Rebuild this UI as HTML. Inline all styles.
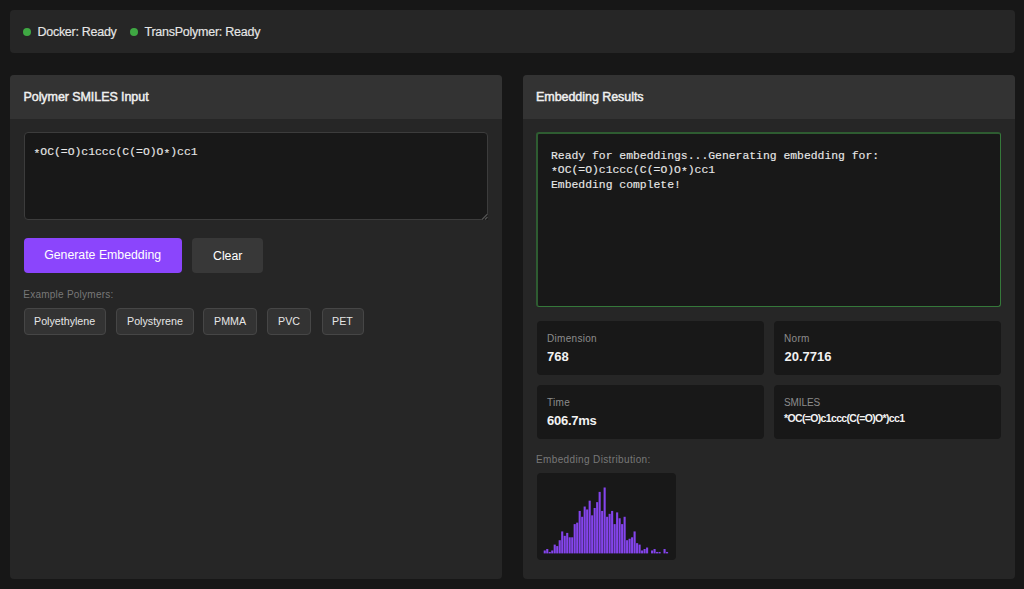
<!DOCTYPE html>
<html><head><meta charset="utf-8">
<style>
*{box-sizing:border-box;margin:0;padding:0}
html,body{width:1024px;height:589px;overflow:hidden;background:#171717;font-family:"Liberation Sans",sans-serif;color:#e8e8e8}
.a{position:absolute;white-space:nowrap;line-height:1}
.status{left:10px;top:10px;width:1005px;height:43px;background:#262626;border-radius:4px}
.dot{width:7.8px;height:7.8px;border-radius:50%;background:#3fa843}
.st{font-size:12.5px;color:#e6e6e6;-webkit-text-stroke:0.15px #e6e6e6}
.panel{top:75px;width:492px;height:503.5px;background:#262626;border-radius:4px;overflow:hidden}
.ph{position:absolute;left:0;top:0;width:100%;height:43.5px;background:#333333}
.pt{font-size:12.5px;color:#f0f0f0;-webkit-text-stroke:0.45px #f0f0f0}
.ta{background:#181818;border:1px solid #3c3c3c;border-radius:4px}
.mono{font-family:"Liberation Mono",monospace;white-space:pre;color:#e8e8e8;font-size:11.4px;-webkit-text-stroke:0.12px #e8e8e8}
.ast{position:relative;top:1.5px}
.btn{border-radius:4px;color:#fff}
.chip{height:27px;background:#333;border:1px solid #464646;border-radius:4px}
.ct{font-size:10.7px;color:#e6e6e6}
.lbl{font-size:10px;color:#787878;letter-spacing:0.24px}
.stat{background:#181818;border-radius:4px;width:226.75px;height:53.5px}
.sl{font-size:10px;color:#8c8c8c;letter-spacing:0.3px}
.sv{font-size:13px;font-weight:bold;color:#f2f2f2}
</style></head><body>
<div class="a status"></div>
<div class="a dot" style="left:23.4px;top:28.1px"></div>
<div class="a st" id="t1" style="left:37.5px;top:25.5px;letter-spacing:-0.28px">Docker: Ready</div>
<div class="a dot" style="left:130.1px;top:28.1px"></div>
<div class="a st" id="t2" style="left:144.5px;top:25.5px;letter-spacing:-0.25px">TransPolymer: Ready</div>

<div class="a panel" style="left:10px">
  <div class="ph"></div>
</div>
<div class="a pt" id="t3" style="left:23.5px;top:91px;letter-spacing:-0.07px">Polymer SMILES Input</div>
<div class="a ta" style="left:23.6px;top:132.3px;width:464.4px;height:87.5px;border-bottom-right-radius:0"></div>
<svg class="a" style="left:476px;top:208px" width="13" height="13"><path d="M5.5 12 L12 5.5 L12 12 Z" fill="#1a1a1a"/><path d="M6 11.5 L11.5 6 M9 11.5 L11.5 9" stroke="#545454" stroke-width="1.1" fill="none"/></svg>
<div class="a mono" id="t5" style="left:33.5px;top:147px"><span class="ast">*</span>OC(=O)c1ccc(C(=O)O<span class="ast">*</span>)cc1</div>
<div class="a btn" style="left:24px;top:238px;width:157.5px;height:35.2px;background:#8b45fc"></div>
<div class="a" id="t7" style="left:44.2px;top:249.3px;font-size:12.3px;color:#fff">Generate Embedding</div>
<div class="a btn" style="left:192px;top:238px;width:71px;height:35.2px;background:#383838"></div>
<div class="a" id="t8" style="left:213px;top:249.5px;font-size:12.3px;color:#fff">Clear</div>
<div class="a lbl" id="t9" style="left:23.3px;top:290px">Example Polymers:</div>
<div class="a chip" style="left:24px;top:308px;width:81.5px"></div>
<div class="a ct" id="c1" style="left:34px;top:315.5px">Polyethylene</div>
<div class="a chip" style="left:116px;top:308px;width:77.5px"></div>
<div class="a ct" id="c2" style="left:127px;top:315.5px">Polystyrene</div>
<div class="a chip" style="left:203px;top:308px;width:54px"></div>
<div class="a ct" id="c3" style="left:214px;top:315.5px">PMMA</div>
<div class="a chip" style="left:267px;top:308px;width:44px"></div>
<div class="a ct" id="c4" style="left:278px;top:315.5px">PVC</div>
<div class="a chip" style="left:321.8px;top:308px;width:42.5px"></div>
<div class="a ct" id="c5" style="left:332px;top:315.5px">PET</div>

<div class="a panel" style="left:523px">
  <div class="ph"></div>
</div>
<div class="a pt" id="t4" style="left:536px;top:91px;letter-spacing:-0.05px">Embedding Results</div>
<div class="a ta" style="left:536px;top:132px;width:465px;height:175px;border-width:2px 1px 1px 2px;border-color:#2e5c31 #35783a #35783a #2e5c31;border-radius:3px"></div>
<div class="a mono" id="t6" style="left:551px;top:148.5px;line-height:14.7px">Ready for embeddings...Generating embedding for:
<span class="ast">*</span>OC(=O)c1ccc(C(=O)O<span class="ast">*</span>)cc1
Embedding complete!</div>

<div class="a stat" style="left:537px;top:321px"></div>
<div class="a sl" id="s1" style="left:547px;top:333.8px">Dimension</div>
<div class="a sv" id="s2" style="left:547px;top:349.5px">768</div>
<div class="a stat" style="left:774.25px;top:321px"></div>
<div class="a sl" id="s3" style="left:784px;top:333.8px">Norm</div>
<div class="a sv" id="s4" style="left:784.5px;top:349.5px">20.7716</div>
<div class="a stat" style="left:537px;top:385px"></div>
<div class="a sl" id="s5" style="left:547px;top:397.8px">Time</div>
<div class="a sv" id="s6" style="left:547px;top:413.5px;letter-spacing:-0.25px">606.7ms</div>
<div class="a stat" style="left:774.25px;top:385px"></div>
<div class="a sl" id="s7" style="left:784px;top:397.8px;letter-spacing:-0.1px">SMILES</div>
<div class="a sv" id="s8" style="left:784px;top:413px;font-size:10.5px;letter-spacing:-0.65px">*OC(=O)c1ccc(C(=O)O*)cc1</div>
<div class="a lbl" id="t10" style="left:536px;top:455px;letter-spacing:0.37px">Embedding Distribution:</div>
<div class="a" style="left:537px;top:473px;width:139px;height:86.5px;background:#181818;border-radius:4px"></div>
<svg class="a" style="left:537px;top:473px" width="139" height="87"><g fill="#8444ec"><rect x="6.70" y="77.47" width="2.1" height="2.93"/><rect x="9.20" y="76.01" width="2.1" height="4.39"/><rect x="11.69" y="78.94" width="2.1" height="1.46"/><rect x="14.19" y="77.47" width="2.1" height="2.93"/><rect x="16.68" y="71.61" width="2.1" height="8.79"/><rect x="19.18" y="73.08" width="2.1" height="7.32"/><rect x="21.68" y="67.22" width="2.1" height="13.18"/><rect x="24.17" y="58.43" width="2.1" height="21.97"/><rect x="26.67" y="62.83" width="2.1" height="17.57"/><rect x="29.16" y="59.90" width="2.1" height="20.50"/><rect x="31.66" y="64.29" width="2.1" height="16.11"/><rect x="34.16" y="64.29" width="2.1" height="16.11"/><rect x="36.65" y="51.11" width="2.1" height="29.29"/><rect x="39.15" y="49.65" width="2.1" height="30.75"/><rect x="41.64" y="37.93" width="2.1" height="42.47"/><rect x="44.14" y="43.79" width="2.1" height="36.61"/><rect x="46.64" y="33.54" width="2.1" height="46.86"/><rect x="49.13" y="36.47" width="2.1" height="43.93"/><rect x="51.63" y="27.68" width="2.1" height="52.72"/><rect x="54.12" y="42.33" width="2.1" height="38.07"/><rect x="56.62" y="35.00" width="2.1" height="45.40"/><rect x="59.12" y="29.15" width="2.1" height="51.25"/><rect x="61.61" y="18.90" width="2.1" height="61.50"/><rect x="64.11" y="37.93" width="2.1" height="42.47"/><rect x="66.60" y="14.50" width="2.1" height="65.90"/><rect x="69.10" y="43.79" width="2.1" height="36.61"/><rect x="71.60" y="40.86" width="2.1" height="39.54"/><rect x="74.09" y="37.93" width="2.1" height="42.47"/><rect x="76.59" y="51.11" width="2.1" height="29.29"/><rect x="79.08" y="39.40" width="2.1" height="41.00"/><rect x="81.58" y="45.25" width="2.1" height="35.15"/><rect x="84.08" y="51.11" width="2.1" height="29.29"/><rect x="86.57" y="43.79" width="2.1" height="36.61"/><rect x="89.07" y="67.22" width="2.1" height="13.18"/><rect x="91.56" y="65.76" width="2.1" height="14.64"/><rect x="94.06" y="64.29" width="2.1" height="16.11"/><rect x="96.56" y="58.43" width="2.1" height="21.97"/><rect x="99.05" y="70.15" width="2.1" height="10.25"/><rect x="101.55" y="71.61" width="2.1" height="8.79"/><rect x="104.04" y="77.47" width="2.1" height="2.93"/><rect x="106.54" y="76.01" width="2.1" height="4.39"/><rect x="109.04" y="74.54" width="2.1" height="5.86"/><rect x="114.03" y="77.47" width="2.1" height="2.93"/><rect x="116.52" y="76.01" width="2.1" height="4.39"/><rect x="119.02" y="78.94" width="2.1" height="1.46"/><rect x="121.52" y="78.94" width="2.1" height="1.46"/><rect x="126.51" y="76.01" width="2.1" height="4.39"/><rect x="129.00" y="78.94" width="2.1" height="1.46"/></g></svg>
</body></html>
